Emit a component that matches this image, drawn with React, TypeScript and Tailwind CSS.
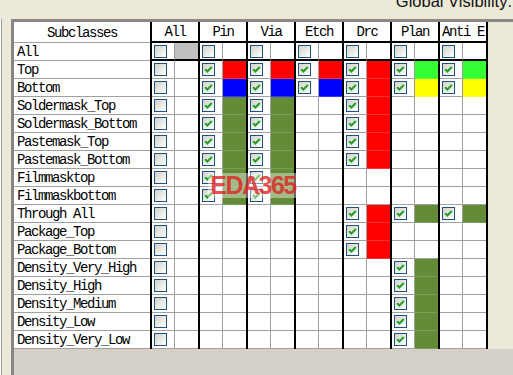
import React from "react";

type Cell = null | { c: boolean; col?: string };

const U: Cell = { c: false };
const ck = (col?: string): Cell => ({ c: true, col });

const colorCls: Record<string, string> = {
  R: "bg-[#ff0000] border-b border-b-white/20",
  B: "bg-[#0000ff] border-b border-b-white/20",
  G: "bg-[#648c38] border-b border-b-white/15",
  LG: "bg-[#33ff33] border-b border-b-white/20",
  Y: "bg-[#ffff00] border-b border-b-white/20",
};

const groups = ["All", "Pin", "Via", "Etch", "Drc", "Plan", "Anti E"];

const mask: Cell[] = [U, ck("G"), ck("G"), null, ck("R"), null, null];
const film: Cell[] = [U, ck("G"), ck("G"), null, null, null, null];
const pkg: Cell[] = [U, null, null, null, ck("R"), null, null];
const dens: Cell[] = [U, null, null, null, null, ck("G"), null];

const rows: { name: string; cells: Cell[] }[] = [
  { name: "All", cells: [U, U, U, U, U, U, U] },
  { name: "Top", cells: [U, ck("R"), ck("R"), ck("R"), ck("R"), ck("LG"), ck("LG")] },
  { name: "Bottom", cells: [U, ck("B"), ck("B"), ck("B"), ck("R"), ck("Y"), ck("Y")] },
  { name: "Soldermask_Top", cells: mask },
  { name: "Soldermask_Bottom", cells: mask },
  { name: "Pastemask_Top", cells: mask },
  { name: "Pastemask_Bottom", cells: mask },
  { name: "Filmmasktop", cells: film },
  { name: "Filmmaskbottom", cells: film },
  { name: "Through All", cells: [U, null, null, null, ck("R"), ck("G"), ck("G")] },
  { name: "Package_Top", cells: pkg },
  { name: "Package_Bottom", cells: pkg },
  { name: "Density_Very_High", cells: dens },
  { name: "Density_High", cells: dens },
  { name: "Density_Medium", cells: dens },
  { name: "Density_Low", cells: dens },
  { name: "Density_Very_Low", cells: dens },
];

function Checkbox({ checked }: { checked: boolean }) {
  return (
    <span className="flex h-[13px] w-[13px] items-center justify-center border border-[#1c5180] bg-linear-to-br from-[#d2d2ca] to-white">
      {checked && (
        <svg width="11" height="11" viewBox="0 0 11 11">
          <path d="M2.2 5.2 L4.4 7.5 L8.8 3" fill="none" stroke="#21a121" strokeWidth="2" />
        </svg>
      )}
    </span>
  );
}

function Row({ name, cells, first }: { name: string; cells: Cell[]; first: boolean }) {
  const bottom = first ? "border-b-2 border-b-black" : "border-b border-b-[#a0a0a0]";
  return (
    <div className="flex h-[18px]">
      <div className="w-[136px] shrink-0 whitespace-nowrap border-b border-b-[#a0a0a0] bg-white pl-[3px] leading-[18px]">
        {name}
      </div>
      {cells.map((cell, i) => {
        let colorClass = "bg-white " + bottom;
        if (first && i === 0) colorClass = "bg-[#c0c0c0] " + bottom;
        else if (cell && cell.col) colorClass = colorCls[cell.col];
        return (
          <div
            key={i}
            className={`flex shrink-0 border-l-2 border-l-black ${i === 6 ? "w-[50px] border-r-2 border-r-black" : "w-[48px]"}`}
          >
            <div className={`flex w-[23px] items-center border-r border-r-[#a0a0a0] bg-white pl-[2px] ${bottom}`}>
              {cell && <Checkbox checked={cell.c} />}
            </div>
            <div className={`w-[23px] ${colorClass}`} />
          </div>
        );
      })}
      <div className="flex-1 bg-[#ece9d8]" />
    </div>
  );
}

export default function App() {
  return (
    <div className="relative h-[375px] w-[513px] overflow-hidden bg-[#ece9d8] text-black">
      <div className="flex h-[19px] justify-end overflow-hidden pr-[1px]">
        <div className="mt-[-7px] whitespace-nowrap font-['Liberation_Sans',Arial,sans-serif] text-[16.5px] leading-none text-[#111]">
          Global Visibility:
        </div>
      </div>
      <div className="flex h-[356px]">
        <div className="w-[11px] shrink-0 shadow-[inset_1px_0_0_#ffffff,inset_2px_0_0_#a0a0a0]" />
        <div className="flex flex-1 flex-col border-l-[3px] border-t-[3px] border-[#878787] bg-[#d4d0c8] font-['Liberation_Mono','Courier_New',monospace] text-[14px] tracking-[-1.4px]">
          <div className="flex h-[21px]">
            <div className="w-[136px] shrink-0 border-b border-b-[#a0a0a0] bg-white pt-[3px] text-center leading-[17px]">
              Subclasses
            </div>
            {groups.map((g, i) => (
              <div
                key={g}
                className={`shrink-0 whitespace-nowrap border-b-2 border-l-2 border-b-black border-l-black bg-white pt-[2px] text-center leading-[17px] ${i === 6 ? "w-[50px] border-r-2 border-r-black" : "w-[48px]"}`}
              >
                {g}
              </div>
            ))}
            <div className="flex-1 bg-[#ece9d8]" />
          </div>
          {rows.map((r, idx) => (
            <Row key={r.name} name={r.name} cells={r.cells} first={idx === 0} />
          ))}
        </div>
      </div>
      <div className="absolute left-[208px] top-[173px] flex h-[25px] w-[90px] items-center justify-center bg-white/40">
        <span className="font-['Liberation_Sans',Arial,sans-serif] text-[25px] font-bold leading-none tracking-[-1.5px] text-[#e02020]/80">
          EDA365
        </span>
      </div>
    </div>
  );
}
